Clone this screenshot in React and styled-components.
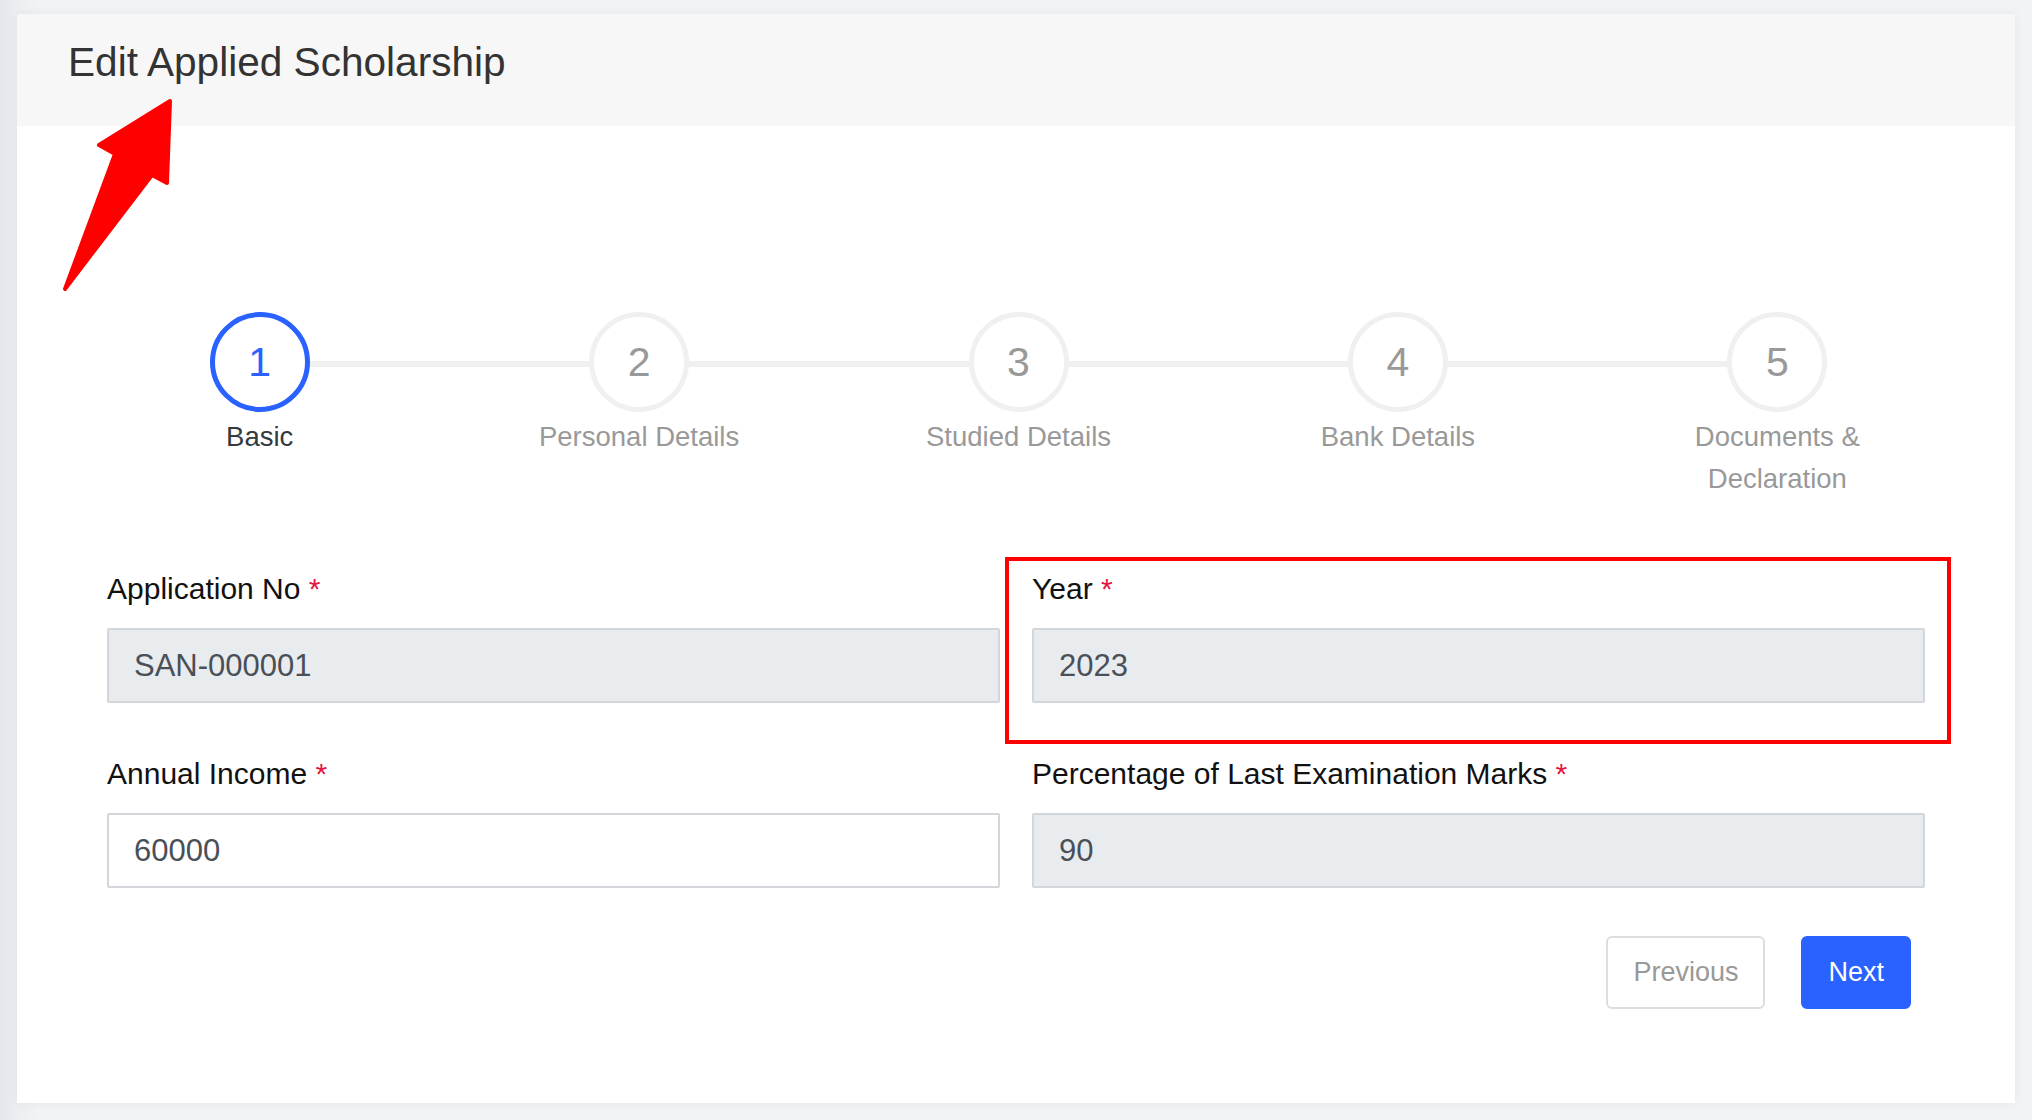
import React from 'react';
import styled, { createGlobalStyle } from 'styled-components';

const GlobalStyle = createGlobalStyle`
  html, body {
    margin: 0;
    padding: 0;
  }
  body {
    background: linear-gradient(to right, #e4e5ea 0px, #eceef2 17px, #f2f3f7 40px);
    font-family: "Liberation Sans", Arial, Helvetica, sans-serif;
  }
  * {
    box-sizing: border-box;
  }
`;

const steps = [
    { no: 1, label: 'Basic' },
    { no: 2, label: 'Personal Details' },
    { no: 3, label: 'Studied Details' },
    { no: 4, label: 'Bank Details' },
    { no: 5, label: 'Documents & Declaration' },
];

const fields = [
    { label: 'Application No', value: 'SAN-000001', readOnly: true },
    { label: 'Year', value: '2023', readOnly: true, marked: true },
    { label: 'Annual Income', value: '60000' },
    { label: 'Percentage of Last Examination Marks', value: '90', readOnly: true },
];

export default function App() {
    const active = 1;

    return (
        <>
            <GlobalStyle />
            <Page>
                <Card>
                    <Header>
                        <Title>Edit Applied Scholarship</Title>
                    </Header>
                    <Body>
                        <Stepper>
                            {steps.map((s) => (
                                <Step key={s.no} $first={s.no === 1}>
                                    <Circle $active={s.no === active}>{s.no}</Circle>
                                    <StepLabel $active={s.no === active}>{s.label}</StepLabel>
                                </Step>
                            ))}
                        </Stepper>

                        <FormGrid>
                            {fields.map((f) => (
                                <Field key={f.label}>
                                    <Label>
                                        {f.label} <Req>*</Req>
                                    </Label>
                                    <Input defaultValue={f.value} readOnly={f.readOnly} $readOnly={f.readOnly} />
                                    {f.marked && <Highlight />}
                                </Field>
                            ))}
                        </FormGrid>

                        <Actions>
                            <Button>Previous</Button>
                            <Button $primary>Next</Button>
                        </Actions>
                    </Body>
                </Card>

                {/* annotation arrow pointing at the title */}
                <Arrow width="200" height="300" viewBox="0 0 200 300">
                    <polygon
                        points="170,101 167,183 152,175 65,289 115,154 99,145"
                        fill="#ff0000"
                        stroke="#ff0000"
                        strokeWidth="4"
                        strokeLinejoin="round"
                    />
                </Arrow>
            </Page>
        </>
    );
}

const Page = styled.div`
  position: relative;
  padding: 14px 17px 17px 17px;
  min-height: 1120px;
`;

const Card = styled.div`
  background: #ffffff;
  box-shadow: 0 0 10px rgba(0, 0, 0, 0.06);
`;

const Header = styled.div`
  height: 112px;
  background: #f7f7f7;
  padding: 28px 51px 0;
`;

const Title = styled.h3`
  margin: 0;
  font-size: 40.6px;
  line-height: 1;
  font-weight: 400;
  color: #333333;
`;

const Body = styled.div`
  padding: 186px 90px 94px;
`;

const Stepper = styled.div`
  display: flex;
  align-items: flex-start;
  margin: 0 -42px 0 -37px;
`;

const Step = styled.div`
  flex: 1;
  position: relative;
  display: flex;
  flex-direction: column;
  align-items: center;
  &::before {
    content: '';
    display: ${(p) => (p.$first ? 'none' : 'block')};
    position: absolute;
    top: 49px;
    left: -50%;
    right: 50%;
    height: 6px;
    background: #f0f0f0;
  }
`;

const Circle = styled.div`
  position: relative;
  z-index: 1;
  width: 100px;
  height: 100px;
  border-radius: 50%;
  border: 5px solid ${(p) => (p.$active ? '#2962ff' : '#f0f0f0')};
  background: #ffffff;
  display: flex;
  align-items: center;
  justify-content: center;
  font-size: 41px;
  color: ${(p) => (p.$active ? '#2962ff' : '#999999')};
`;

const StepLabel = styled.div`
  margin-top: 4px;
  max-width: 240px;
  text-align: center;
  font-size: 27.5px;
  line-height: 42px;
  color: ${(p) => (p.$active ? '#343a40' : '#999999')};
`;

const FormGrid = styled.div`
  display: grid;
  grid-template-columns: 1fr 1fr;
  column-gap: 32px;
  row-gap: 48px;
  margin-top: 66px;
`;

const Field = styled.div`
  position: relative;
  display: flex;
  flex-direction: column;
`;

const Label = styled.label`
  font-size: 30px;
  line-height: 45px;
  color: #111111;
  margin-bottom: 17px;
`;

const Req = styled.span`
  color: #e3173e;
`;

const Input = styled.input`
  height: 75px;
  width: 100%;
  border: 2px solid #d3d7dc;
  border-radius: 2px;
  background: ${(p) => (p.$readOnly ? '#e9ecef' : '#ffffff')};
  padding: 0 25px;
  font-family: "Liberation Sans", Arial, Helvetica, sans-serif;
  font-size: 31px;
  color: #495057;
  outline: none;
`;

const Highlight = styled.div`
  position: absolute;
  top: -9px;
  bottom: -41px;
  left: -27px;
  right: -26px;
  border: 4px solid #ff0000;
  pointer-events: none;
`;

const Actions = styled.div`
  display: flex;
  justify-content: flex-end;
  gap: 36px;
  margin-top: 48px;
  padding-right: 14px;
`;

const Button = styled.button`
  height: 73px;
  padding: 0 25px;
  border-radius: 6px;
  font-family: "Liberation Sans", Arial, Helvetica, sans-serif;
  font-size: 27px;
  border: 2px solid ${(p) => (p.$primary ? '#2962ff' : '#dddddd')};
  background: ${(p) => (p.$primary ? '#2962ff' : '#ffffff')};
  color: ${(p) => (p.$primary ? '#ffffff' : '#999999')};
  cursor: pointer;
`;

const Arrow = styled.svg`
  position: absolute;
  left: 0;
  top: 0;
  pointer-events: none;
`;
